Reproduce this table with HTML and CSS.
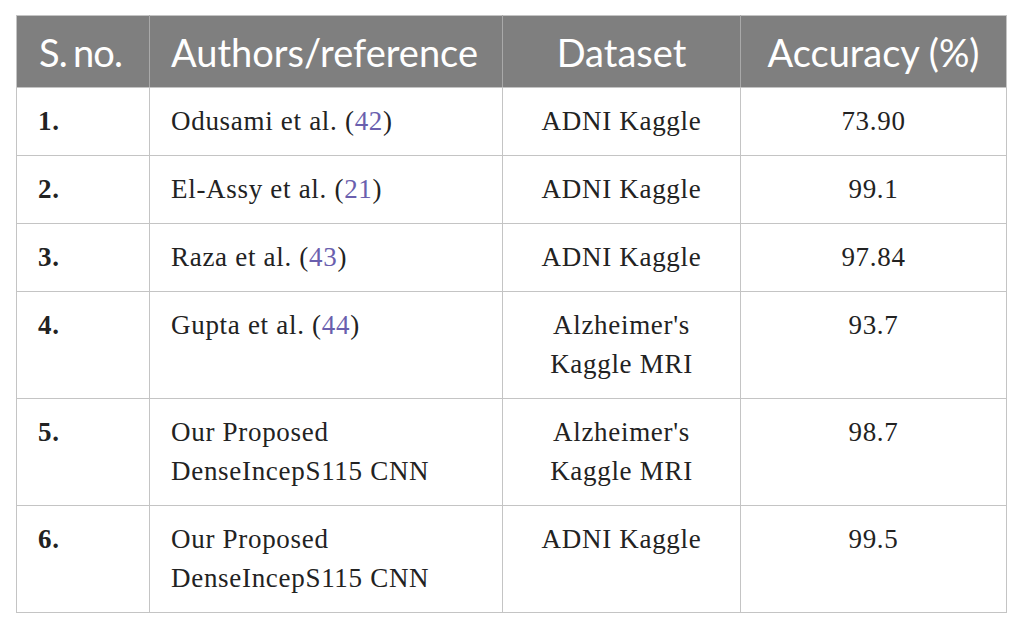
FILE: index.html
```html
<!DOCTYPE html>
<html>
<head>
<meta charset="utf-8">
<link rel="stylesheet" href="styles.css">
</head>
<body>
<div class="wrap">
<table class="results">
  <colgroup>
    <col class="c1"><col class="c2"><col class="c3"><col class="c4">
  </colgroup>
  <thead>
    <tr>
      <th class="left">S. no.</th>
      <th class="left">Authors/reference</th>
      <th>Dataset</th>
      <th>Accuracy (%)</th>
    </tr>
  </thead>
  <tbody>
    <tr>
      <td class="num">1.</td>
      <td class="left">Odusami et al. (<a class="ref" href="#">42</a>)</td>
      <td>ADNI Kaggle</td>
      <td>73.90</td>
    </tr>
    <tr>
      <td class="num">2.</td>
      <td class="left">El-Assy et al. (<a class="ref" href="#">21</a>)</td>
      <td>ADNI Kaggle</td>
      <td>99.1</td>
    </tr>
    <tr>
      <td class="num">3.</td>
      <td class="left">Raza et al. (<a class="ref" href="#">43</a>)</td>
      <td>ADNI Kaggle</td>
      <td>97.84</td>
    </tr>
    <tr>
      <td class="num">4.</td>
      <td class="left">Gupta et al. (<a class="ref" href="#">44</a>)</td>
      <td>Alzheimer's<br>Kaggle MRI</td>
      <td>93.7</td>
    </tr>
    <tr>
      <td class="num">5.</td>
      <td class="left">Our Proposed<br>DenseIncepS115 CNN</td>
      <td>Alzheimer's<br>Kaggle MRI</td>
      <td>98.7</td>
    </tr>
    <tr>
      <td class="num">6.</td>
      <td class="left">Our Proposed<br>DenseIncepS115 CNN</td>
      <td>ADNI Kaggle</td>
      <td>99.5</td>
    </tr>
  </tbody>
</table>
</div>
</body>
</html>
```

FILE: styles.css
```css
html, body {
  margin: 0;
  padding: 0;
  background: #ffffff;
}

.wrap {
  padding: 15px 0 0 16px;
}

.results {
  border-collapse: collapse;
  table-layout: fixed;
  width: 991px;
  border: 1px solid #c4c4c4;
}

.c1 { width: 133px; }
.c2 { width: 353px; }
.c3 { width: 238px; }
.c4 { width: 266px; }

.results th {
  background: #7f7f7f;
  color: #ffffff;
  font-family: "Lato", "Open Sans", sans-serif;
  font-weight: 400;
  font-size: 38px;
  line-height: 42px;
  height: 72px;
  padding: 0 21px;
  text-align: center;
  vertical-align: middle;
  white-space: nowrap;
  border-left: 1px solid #a9a9a9;
  border-bottom: 1px solid #c4c4c4;
  box-sizing: border-box;
}

.results th:first-child {
  border-left: none;
  padding: 0 0 0 22px;
  letter-spacing: -0.8px;
  word-spacing: -3px;
}

.results td {
  font-family: "Liberation Serif", "Times New Roman", serif;
  font-size: 27px;
  letter-spacing: 0.7px;
  line-height: 39px;
  color: #222222;
  padding: 14px 21px;
  text-align: center;
  vertical-align: top;
  border: 1px solid #c4c4c4;
}

.results .left {
  text-align: left;
}

.results td.num {
  text-align: left;
  font-weight: 700;
}

.ref {
  color: #6a5fae;
  text-decoration: none;
}
```
